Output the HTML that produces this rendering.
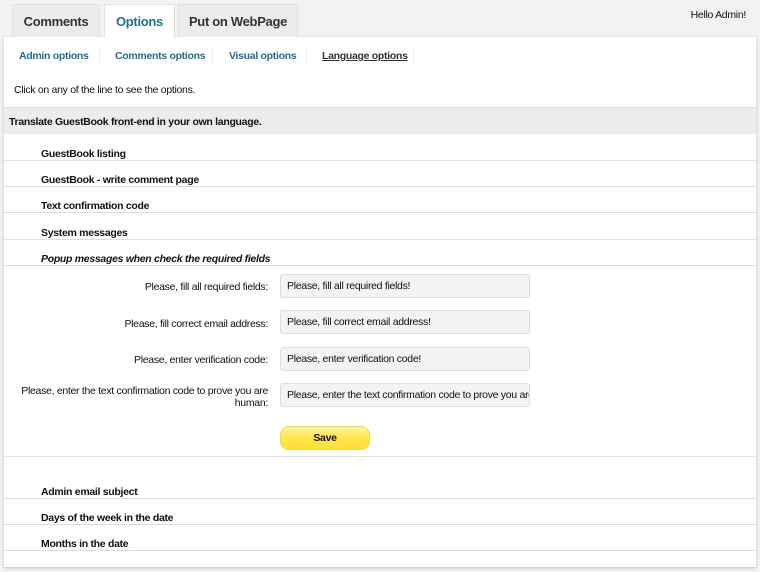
<html><head><style>
body{margin:0;background:#f2f2f2;font-family:"Liberation Sans",sans-serif;font-size:10.5px;letter-spacing:-0.3px;color:#111;width:760px;height:572px;position:relative;overflow:hidden}
.a{position:absolute}
.tab{position:absolute;top:4px;height:33px;background:#ececec;border:1px solid #e0e0e0;border-bottom:none;font-weight:bold;font-size:13px;color:#333;text-align:center;line-height:34px;box-sizing:border-box}
.panel{position:absolute;left:4px;top:37px;width:752px;height:530px;background:#fff;box-shadow:0 1px 3px #bbb}
.nav{position:absolute;top:50px;font-weight:bold;color:#1f6f8f;font-size:10.5px}
.sep{position:absolute;top:47px;width:1px;height:17px;background:#eee}
.row{position:absolute;left:4px;width:752px;border-bottom:1px solid #ddd;height:26px;box-sizing:border-box}
.row span{position:absolute;left:37px;bottom:0px;font-weight:bold}
.lbl{position:absolute;right:492px;text-align:right;width:255px}
.inp{position:absolute;left:280px;width:250px;height:24px;box-sizing:border-box;border:1px solid #ddd;border-radius:3px;background:#f3f3f3;padding-left:6px;line-height:22px;white-space:nowrap;overflow:hidden}
</style></head><body>
<div class="panel"></div>
<div class="tab" style="left:12px;width:88px">Comments</div>
<div class="tab" style="left:104px;width:71px;background:#fff;height:34px;color:#1f6f8f">Options</div>
<div class="tab" style="left:178px;width:120px">Put on WebPage</div>
<div class="a" style="right:14px;top:9px">Hello Admin!</div>
<div class="nav" style="left:19px">Admin options</div><div class="sep" style="left:99px"></div>
<div class="nav" style="left:115px">Comments options</div><div class="sep" style="left:212px"></div>
<div class="nav" style="left:229px">Visual options</div><div class="sep" style="left:306px"></div>
<div class="nav" style="left:322px;color:#333;text-decoration:underline">Language options</div><div class="sep" style="left:413px"></div>
<div class="a" style="left:14px;top:84px">Click on any of the line to see the options.</div>
<div class="a" style="left:4px;top:107px;width:752px;height:27px;background:#ececec;border-top:1px solid #ddd;box-sizing:border-box"><b style="position:absolute;left:5px;top:8px">Translate GuestBook front-end in your own language.</b></div>
<div class="row" style="top:135px"><span>GuestBook listing</span></div>
<div class="row" style="top:161px"><span>GuestBook - write comment page</span></div>
<div class="row" style="top:187px"><span>Text confirmation code</span></div>
<div class="row" style="top:214px"><span>System messages</span></div>
<div class="row" style="top:240px"><span><i>Popup messages when check the required fields</i></span></div>
<div class="lbl" style="top:281px">Please, fill all required fields:</div>
<div class="inp" style="top:274px">Please, fill all required fields!</div>
<div class="lbl" style="top:318px">Please, fill correct email address:</div>
<div class="inp" style="top:310px">Please, fill correct email address!</div>
<div class="lbl" style="top:354px">Please, enter verification code:</div>
<div class="inp" style="top:347px">Please, enter verification code!</div>
<div class="lbl" style="top:385px">Please, enter the text confirmation code to prove you are human:</div>
<div class="inp" style="top:383px">Please, enter the text confirmation code to prove you are human!</div>
<div class="a" style="left:280px;top:426px;width:90px;height:24px;border-radius:9px;background:linear-gradient(#fff3a0,#ffe54a 50%,#fde03a);border:1px solid #f0d84a;box-sizing:border-box;text-align:center;line-height:22px;font-weight:bold">Save</div>
<div class="a" style="left:4px;top:456px;width:752px;border-top:1px solid #e4e4e4"></div>
<div class="row" style="top:473px"><span>Admin email subject</span></div>
<div class="row" style="top:499px"><span>Days of the week in the date</span></div>
<div class="row" style="top:525px"><span>Months in the date</span></div>
</body></html>
